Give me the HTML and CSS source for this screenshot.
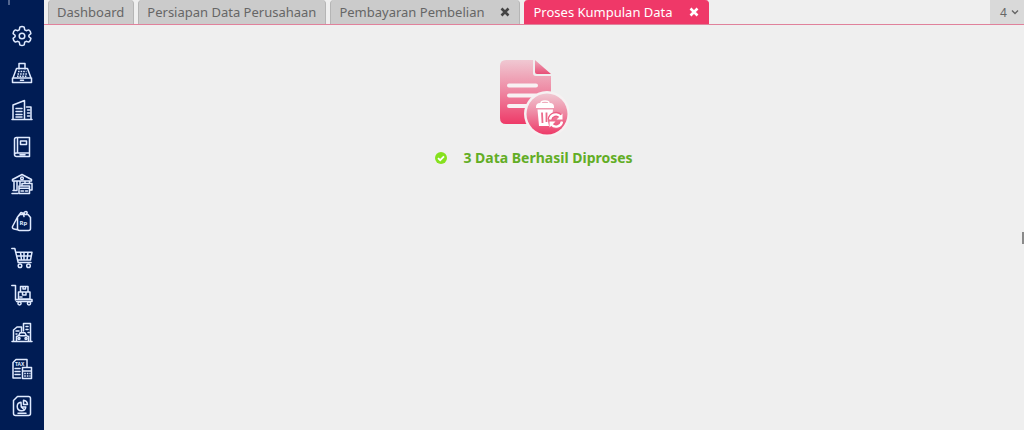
FILE: index.html
```html
<!DOCTYPE html>
<html lang="id">
<head>
<meta charset="UTF-8" />
<meta name="viewport" content="width=device-width, initial-scale=1.0" />
<title>Proses Kumpulan Data</title>
<link rel="stylesheet" href="styles.css">
</head>

<body>
<nav class="sidebar">
<div class="sidebar-mark"></div>
<a href="#" aria-label="Pengaturan"><svg viewBox="0 0 22 22"><path d="M8.8 2.2Q11 1 13.2 2.2L13.7 4.8L15.2 5.7L17.7 4.9Q19.8 6.2 19.9 8.6L17.9 10.3V11.7L19.9 13.4Q19.8 15.8 17.7 17.1L15.2 16.3L13.7 17.2L13.2 19.8Q11 21 8.8 19.8L8.3 17.2L6.8 16.3L4.3 17.1Q2.2 15.8 2.1 13.4L4.1 11.7V10.3L2.1 8.6Q2.2 6.2 4.3 4.9L6.8 5.7L8.3 4.8Z"/><circle cx="11" cy="11" r="2.8"/></svg></a>
<a href="#" aria-label="Kasir"><svg viewBox="0 0 22 22"><path d="M8 7V1.5H14V7M5.5 6.5H16.5L20 16H2ZM1.5 16H20.5V20.5H1.5ZM9.5 18.2H12.5"/><path class="dots" d="M7 9.5H15.5M6.5 12H16M6 14.2H16.5"/></svg></a>
<a href="#" aria-label="Perusahaan"><svg viewBox="0 0 22 22"><path d="M1 20.5H21M2 20V6L13.5 1.5V20M15.5 8H20V20M5 9.5H11M5 12.5H11M5 15.5H11M5 18H11M16.5 11H18.5M16.5 14H18.5M16.5 17H18.5"/></svg></a>
<a href="#" aria-label="Buku Besar"><svg viewBox="0 0 22 22"><path d="M3.5 18.5V3.5Q3.5 1.5 5.5 1.5H18.5V17H5.5Q3.5 17 3.5 18.8Q3.5 20.5 5.5 20.5H18.5V17M6.5 1.5V17M9.5 5H15.5V8.5H9.5ZM9 18.8H14"/></svg></a>
<a href="#" aria-label="Kas Bank"><svg viewBox="0 0 22 22"><path d="M1.5 8V6.5L11 1.5L20.5 6.5V8ZM3 8V17M6 8V17M9 8V12M14 8V10M18.5 8V10M1 20.5H7M2 17.5H6"/><circle cx="11" cy="5.4" r="1.3"/><path d="M11 12V10.5H21V17H19M8 13H18.5V20.5H8ZM8 15.3H18.5M10 18H12.5M14.5 18H16.5"/></svg></a>
<a href="#" aria-label="Harga"><svg viewBox="0 0 22 22"><path d="M6.5 7L9 4.5H17L19.5 7.5V18.5Q19.5 20.5 17.5 20.5H8.5Q6.5 20.5 6.5 18.5ZM6.5 7L1.5 16.5Q1 18.5 3 19L6.5 19.8M7 6.5L10 2.5L13.5 3.8M13 6.5Q11.5 2 15 1.5Q17 1.8 15.5 4"/><text x="8.5" y="14.5">Rp</text></svg></a>
<a href="#" aria-label="Penjualan"><svg viewBox="0 0 22 22"><path d="M0.8 1.5H3.8L7.2 15.5H20M4.8 5.2H21L19.5 13H6.6M5.7 9H20.2M9.5 5.2L10.5 13M13 5.2V13M17 5.2L16 13"/><circle cx="9" cy="18.8" r="1.8"/><circle cx="17.5" cy="18.8" r="1.8"/></svg></a>
<a href="#" aria-label="Pembelian"><svg viewBox="0 0 22 22"><path d="M0.8 1.5H4.5V16M4.5 15.5H21V17.5H5.5M9.5 2.5H17V8H9.5ZM12 2.5V5H14.5V2.5M7.5 8H19V15H7.5ZM11.5 8V11H15V8M9 13H11"/><circle cx="8.5" cy="19.3" r="1.6"/><circle cx="18" cy="19.3" r="1.6"/></svg></a>
<a href="#" aria-label="Aset"><svg viewBox="0 0 22 22"><path d="M1 20.5H21M2.5 20V9L6 6H10.5V11M12.5 10V2.5H19.5V20M5 10H8M5 13H6M15 5.5H17M15 8.5H17M17 11.5H18M5.5 19.5V15.5L7.5 14.8L9 11.8H14L15.5 14.8L17.5 15.5V19.5M8 14.8H15"/><circle cx="8" cy="17.5" r="1"/><circle cx="15" cy="17.5" r="1"/></svg></a>
<a href="#" aria-label="Pajak"><svg viewBox="0 0 22 22"><path d="M9.5 20H2V4.5L5 1.5H16V8.5M4 10.5H9M4 13.5H9M4 16.5H9M11.5 9.5H20.5V20.5H11.5ZM11.5 13H20.5"/><path class="dots" d="M13.2 15.5H19.5M13.2 18H19.5"/><text class="tax" x="4" y="7.8">TAX</text></svg></a>
<a href="#" aria-label="Laporan"><svg viewBox="0 0 22 22"><path d="M2.5 18.5V5.5L6.5 1.5H17.5Q19.5 1.5 19.5 3.5V18.5Q19.5 20.5 17.5 20.5H4.5Q2.5 20.5 2.5 18.5ZM10 7.2A4.3 4.3 0 1 0 14.8 12H10.3ZM12.5 5.3V9.5H16.5Q16.2 5.8 12.5 5.3ZM10.3 12L13.5 15M7 18.3H15"/></svg></a>
</nav>

<div class="page">
<header class="tab-bar">
<div class="tab"><a href="#">Dashboard</a></div>
<div class="tab"><a href="#">Persiapan Data Perusahaan</a></div>
<div class="tab">
<a href="#">Pembayaran Pembelian</a>
<button class="tab-close" aria-label="Tutup Pembayaran Pembelian"><svg viewBox="0 0 10 10"><path d="M1.5 1.5L8.5 8.5M8.5 1.5L1.5 8.5"/></svg></button>
</div>
<div class="tab tab-active">
<a href="#">Proses Kumpulan Data</a>
<button class="tab-close" aria-label="Tutup Proses Kumpulan Data"><svg viewBox="0 0 10 10"><path d="M1.5 1.5L8.5 8.5M8.5 1.5L1.5 8.5"/></svg></button>
</div>
<button class="tab-count">4 <svg viewBox="0 0 8 8"><path d="M1 2.5L4 5.5L7 2.5"/></svg></button>
</header>

<main class="content">
<svg class="result-icon" viewBox="0 0 70 77">
<defs>
<linearGradient id="doc" x1="0" y1="0" x2="0" y2="1"><stop offset="0" stop-color="#f0c8d2"/><stop offset="0.5" stop-color="#ee86a1"/><stop offset="1" stop-color="#ee3a68"/></linearGradient>
<linearGradient id="fold" x1="0" y1="0" x2="0" y2="1"><stop offset="0" stop-color="#edaabb"/><stop offset="1" stop-color="#e84f77"/></linearGradient>
</defs>
<path fill="url(#doc)" d="M7 1H34V14Q34 17 37 17H52V65H7Q1 65 1 59V7Q1 1 7 1Z"/>
<path fill="url(#fold)" d="M36 1L52 15H38Q36 15 36 13Z"/>
<path class="doc-lines" d="M10 26.5H37M10 36.5H37M10 47H28"/>
<circle class="badge-ring" cx="48" cy="55" r="23"/>
<circle fill="url(#doc)" cx="48" cy="55" r="20.5"/>
<g class="trash">
<path class="thin" d="M42 44Q42 42 46 42Q50 42 50 44"/>
<path class="solid" d="M37 48Q37 44 41 44H51Q55 44 55 48V49H37Z"/>
<path class="solid" d="M38.5 50.5H54L53.5 55Q48 57 49 62L50 67H40Z"/>
<path class="slots" d="M43 53.5L43.5 64M47.5 53.5V63"/>
<path class="arrow-back" d="M51 60.5A6 6 0 0 1 61.5 57.5M63 62.5A6 6 0 0 1 52.5 65.5"/>
<path d="M51 60.5A6 6 0 0 1 61.5 57.5M63 62.5A6 6 0 0 1 52.5 65.5"/>
<path class="solid" d="M63.5 54.5V60.5H57.5ZM50.5 68.5V62.5H56.5Z"/>
</g>
</svg>
<p class="result">
<svg class="check" viewBox="0 0 12 12"><circle cx="6" cy="6" r="6"/><path d="M3 6.2L5.2 8.2L9 4.4"/></svg>
<span>3 Data Berhasil Diproses</span>
</p>
</main>
</div>
<div class="scroll-handle"></div>
</body>
</html>
```
FILE: styles.css
```css
* {
box-sizing: border-box;
}

body {
margin: 0;
min-height: 100vh;
display: flex;
background-color: #efefef;
color: #666;
font-family: "Noto Sans", "Open Sans", sans-serif;
font-size: 13px;
}

a {
color: inherit;
text-decoration: none;
}

button {
border: none;
padding: 0;
background: none;
color: inherit;
font: inherit;
cursor: pointer;
}

/* Left menu */
.sidebar {
flex: none;
width: 44px;
display: flex;
flex-direction: column;
align-items: center;
gap: 15px;
background-color: #001c54;
}

.sidebar-mark {
align-self: flex-start;
width: 2px;
height: 5px;
margin: 0 0 5px 8px;
background-color: #53668f;
}

.sidebar a,
.sidebar svg {
display: block;
width: 22px;
height: 22px;
}

.sidebar svg {
fill: none;
stroke: #dfeaff;
stroke-width: 1.5;
stroke-linejoin: round;
stroke-linecap: round;
}

.sidebar .dots {
stroke-linecap: butt;
stroke-dasharray: 1.6 1;
}

.sidebar text {
fill: #dfeaff;
stroke: none;
font-size: 6px;
font-weight: bold;
}

.sidebar .tax {
font-size: 5px;
}

/* Tabs */
.page {
flex: 1;
min-width: 0;
}

.tab-bar {
display: flex;
gap: 4px;
height: 25px;
padding-left: 4px;
border-bottom: 1px solid #e0819b;
}

.tab {
display: flex;
align-items: center;
gap: 16px;
padding: 0 9px 0 8px;
border: 1px solid #b5b5b5;
border-width: 0 1px;
border-radius: 4px 4px 0 0;
background-color: #cbcbcb;
white-space: nowrap;
}

.tab-active {
border-color: #ef3868;
background-color: #ef3868;
color: #fff;
}

.tab-close {
width: 10px;
height: 10px;
}

.tab-close svg {
display: block;
fill: none;
stroke: #444;
stroke-width: 2.6;
}

.tab-active .tab-close svg {
stroke: #fff;
}

.tab-count {
display: flex;
align-items: center;
justify-content: center;
gap: 4px;
width: 34px;
padding-left: 5px;
margin-left: auto;
background-color: #d9d9d9;
font-size: 12px;
}

.tab-count svg {
width: 8px;
height: 8px;
fill: none;
stroke: #666;
stroke-width: 1.4;
}

/* Result message */
.content {
display: flex;
flex-direction: column;
align-items: center;
gap: 12px;
padding-top: 34px;
}

.result-icon {
width: 70px;
height: 77px;
}

.doc-lines {
stroke: #f8f1f3;
stroke-width: 4;
stroke-linecap: round;
}

.badge-ring {
fill: #f6f1f2;
}

.trash {
fill: none;
stroke: #fff;
stroke-width: 2.4;
}

.trash .solid {
fill: #fff;
stroke: none;
}

.trash .thin {
stroke-width: 1.4;
}

.trash .slots {
stroke: #ec6b8c;
stroke-width: 1.8;
}

.trash .arrow-back {
stroke: #ec5f84;
stroke-width: 5;
}

.result {
display: flex;
align-items: center;
gap: 16px;
margin: 0;
color: #62ad25;
font-size: 14px;
font-weight: bold;
line-height: 20px;
}

.check {
width: 12px;
height: 12px;
fill: #86e11e;
}

.check path {
fill: none;
stroke: #fff;
stroke-width: 1.8;
}

/* Handle on the right edge */
.scroll-handle {
position: absolute;
top: 232px;
right: 0;
width: 2px;
height: 12px;
background-color: #8a8a8a;
}
```
